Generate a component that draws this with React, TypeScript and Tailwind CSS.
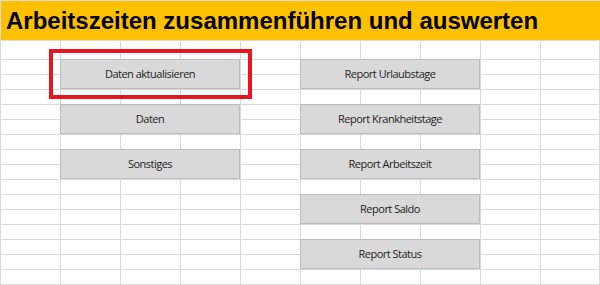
import React from 'react'

// Buttons placed on the sheet grid (3 cols x 2 rows each)
const BUTTONS: { label: string; cls: string }[] = [
  { label: 'Daten aktualisieren', cls: 'col-start-2 row-start-3' },
  { label: 'Daten', cls: 'col-start-2 row-start-6' },
  { label: 'Sonstiges', cls: 'col-start-2 row-start-9' },
  { label: 'Report Urlaubstage', cls: 'col-start-6 row-start-3' },
  { label: 'Report Krankheitstage', cls: 'col-start-6 row-start-6' },
  { label: 'Report Arbeitszeit', cls: 'col-start-6 row-start-9' },
  { label: 'Report Saldo', cls: 'col-start-6 row-start-12' },
  { label: 'Report Status', cls: 'col-start-6 row-start-15' },
]

// 11 columns x 17 body rows, minus 8 buttons of 3x2 cells
const EMPTY_CELLS = 11 * 17 - BUTTONS.length * 6

export default function App() {
  return (
    <div className="relative h-[285px] w-[600px] overflow-hidden bg-white">
      <div className="grid grid-cols-[repeat(9,60px)_59px_60px] grid-rows-[40px_19px_repeat(16,15px)]">
        {/* ── Title bar ── */}
        <div className="col-span-11 row-start-1 flex items-center border-t border-l border-[#dadada] bg-[#ffc000] pl-[5px]">
          <h1
            className="whitespace-nowrap text-[24px] font-bold leading-none text-black"
            style={{ fontFamily: '"Liberation Sans", Arial, sans-serif' }}
          >
            Arbeitszeiten zusammenführen und auswerten
          </h1>
        </div>

        {/* ── Sheet buttons ── */}
        {BUTTONS.map((b) => (
          <SheetButton key={b.label} label={b.label} className={b.cls} />
        ))}

        {/* ── Empty cells ── */}
        {Array.from({ length: EMPTY_CELLS }).map((_, i) => (
          <div key={i} className="border-t border-l border-[#dadada]" />
        ))}
      </div>

      {/* Red highlight frame */}
      <div className="pointer-events-none absolute left-[49px] top-[49px] h-[50px] w-[203px] border-4 border-[#e8141e]" />
    </div>
  )
}

function SheetButton({ label, className }: { label: string; className: string }) {
  return (
    <div
      className={`${className} col-span-3 row-span-2 flex items-center justify-center border border-[#bcbcbc] bg-[#d9d9d9] text-[11px] text-[#1e1e1e]`}
      style={{ fontFamily: '"Open Sans", "Liberation Sans", sans-serif', letterSpacing: '-0.5px' }}
    >
      {label}
    </div>
  )
}
